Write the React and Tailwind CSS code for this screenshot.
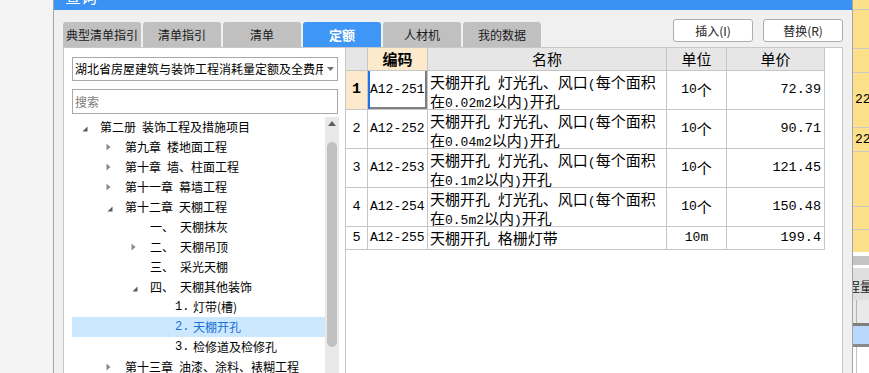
import React from "react";

const CJK = "font-['Noto_Sans_CJK_SC',sans-serif]";
const MONO = "font-['Liberation_Mono',monospace]";

function Mixed({ text, asciiClass }) {
  const parts = text.split(/([\x20-\x7E]+)/).filter(Boolean);
  return parts.map((p, i) =>
    /^[\x20-\x7E]+$/.test(p) ? (
      <span key={i} className={asciiClass}>
        {p}
      </span>
    ) : (
      <span key={i}>{p}</span>
    )
  );
}

function Tri({ open }) {
  return open ? (
    <svg width="6" height="6" viewBox="0 0 6 6" className="ml-[1px] mt-[4px]">
      <polygon points="5.5,0.5 5.5,5.5 0.5,5.5" fill="#5a5a5a" />
    </svg>
  ) : (
    <svg width="5" height="8" viewBox="0 0 5 8">
      <polygon points="0.5,0.5 4.5,4 0.5,7.5" fill="#8a8a8a" />
    </svg>
  );
}

const padCls = ["pl-[9px]", "pl-[34px]", "pl-[59px]", "pl-[84px]"];

const tree = [
  { lv: 0, open: true, a: "第二册", b: "装饰工程及措施项目" },
  { lv: 1, open: false, a: "第九章", b: "楼地面工程" },
  { lv: 1, open: false, a: "第十章", b: "墙、柱面工程" },
  { lv: 1, open: false, a: "第十一章", b: "幕墙工程" },
  { lv: 1, open: true, a: "第十二章", b: "天棚工程" },
  { lv: 2, a: "一、", b: "天棚抹灰" },
  { lv: 2, open: false, a: "二、", b: "天棚吊顶" },
  { lv: 2, a: "三、", b: "采光天棚" },
  { lv: 2, open: true, a: "四、", b: "天棚其他装饰" },
  { lv: 3, a: "1.", b: "灯带(槽)", num: true },
  { lv: 3, a: "2.", b: "天棚开孔", num: true, sel: true },
  { lv: 3, a: "3.", b: "检修道及检修孔", num: true },
  { lv: 1, open: false, a: "第十三章", b: "油漆、涂料、裱糊工程" },
];

const rows = [
  { n: "1", code: "A12-251", name: ["天棚开孔 灯光孔、风口(每个面积", "在0.02m2以内)开孔"], unit: "10个", price: "72.39" },
  { n: "2", code: "A12-252", name: ["天棚开孔 灯光孔、风口(每个面积", "在0.04m2以内)开孔"], unit: "10个", price: "90.71" },
  { n: "3", code: "A12-253", name: ["天棚开孔 灯光孔、风口(每个面积", "在0.1m2以内)开孔"], unit: "10个", price: "121.45" },
  { n: "4", code: "A12-254", name: ["天棚开孔 灯光孔、风口(每个面积", "在0.5m2以内)开孔"], unit: "10个", price: "150.48" },
  { n: "5", code: "A12-255", name: ["天棚开孔 格栅灯带"], unit: "10m", price: "199.4" },
];

const tabs = ["典型清单指引", "清单指引", "清单", "定额", "人材机", "我的数据"];

const cell = "border-r border-b border-[#c6c6c6]";

export default function App() {
  return (
    <div className={`flex h-[373px] w-[869px] overflow-hidden ${CJK} text-[12px] text-black`}>
      {/* left background strip */}
      <div className="h-full w-[54px] shrink-0 border-r border-[#a6a6a6] bg-[#f3f3f3]" />

      {/* dialog */}
      <div className="flex h-full w-[799px] shrink-0 flex-col border-r border-[#a6a6a6] bg-[#f0f0f0]">
        <div className="h-[10px] shrink-0 overflow-hidden bg-[#3a92f4] pl-[11px]">
          <div className="-mt-[12px] text-[16px] leading-[16px] text-white">查询</div>
        </div>

        <div className="flex min-h-0 flex-1 flex-col px-[9px]">
          {/* tabs + buttons */}
          <div className="flex h-[37px] shrink-0 items-end justify-between">
            <div className="flex items-end gap-[2px]">
              {tabs.map((t) =>
                t === "定额" ? (
                  <div
                    key={t}
                    className="flex h-[25px] w-[78px] items-center justify-center rounded-t-[3px] bg-[#3e97f7] text-[13px] font-bold text-white"
                  >
                    {t}
                  </div>
                ) : (
                  <div
                    key={t}
                    className="flex h-[25px] w-[78px] items-center justify-center rounded-t-[3px] bg-[#c0c0c0] text-[12px] text-[#1a1a1a]"
                  >
                    {t}
                  </div>
                )
              )}
            </div>
            <div className="mb-[5px] flex gap-[10px]">
              <div className="flex h-[23px] w-[80px] items-center justify-center rounded-[3px] border border-[#adadad] bg-white text-[12px] text-[#222]">
                插入(I)
              </div>
              <div className="flex h-[23px] w-[80px] items-center justify-center rounded-[3px] border border-[#adadad] bg-white text-[12px] text-[#222]">
                替换(R)
              </div>
            </div>
          </div>

          {/* content frame */}
          <div className="flex min-h-0 flex-1 border-l border-r border-t border-[#c8c8c8]">
            {/* left panel */}
            <div className="flex w-[281px] shrink-0 flex-col bg-white">
              <div className="pl-[8px] pr-[7px] pt-[9px]">
                <div className="flex h-[24px] items-center border border-[#a9a9a9] bg-white pl-[2px]">
                  <div className="w-[248px] overflow-hidden whitespace-nowrap text-[12px]">
                    湖北省房屋建筑与装饰工程消耗量定额及全费用基价表(2018)
                  </div>
                  <div className="flex flex-1 justify-center">
                    <svg width="7" height="4" viewBox="0 0 7 4">
                      <polygon points="0,0 7,0 3.5,4" fill="#707070" />
                    </svg>
                  </div>
                </div>
              </div>
              <div className="pl-[8px] pr-[7px] pt-[8px]">
                <div className="flex h-[25px] items-center border border-[#a9a9a9] bg-white pl-[2px] text-[12px] text-[#7a7a7a]">
                  搜索
                </div>
              </div>
              <div className="flex min-h-0 flex-1 pl-[8px] pr-[6px] pt-[3px]">
                <div className="flex w-[253px] flex-col">
                  {tree.map((r, i) => (
                    <div
                      key={i}
                      className={`flex h-[20px] shrink-0 items-center whitespace-nowrap leading-[20px] ${padCls[r.lv]} ${
                        r.sel ? "bg-[#cce8ff] text-[#1a6fd8]" : "text-black"
                      }`}
                    >
                      <div className="flex w-[19px] shrink-0 items-center">
                        {r.open !== undefined && <Tri open={r.open} />}
                      </div>
                      {r.num ? (
                        <span className={`w-[18px] shrink-0 ${MONO} text-[12px]`}>{r.a}</span>
                      ) : (
                        <span className="mr-[6px]">{r.a}</span>
                      )}
                      <span>
                        <Mixed text={r.b} asciiClass="" />
                      </span>
                    </div>
                  ))}
                </div>
                <div className="flex w-[14px] shrink-0 flex-col items-center bg-[#e9e9e9]">
                  <svg width="8" height="5" viewBox="0 0 8 5" className="mt-[4px]">
                    <polygon points="0,5 8,5 4,0" fill="#606060" />
                  </svg>
                  <div className="mt-[16px] h-[205px] w-[10px] rounded-full bg-[#c1c1c1]" />
                </div>
              </div>
            </div>

            {/* table area */}
            <div className="min-w-0 flex-1 border-l border-[#c6c6c6] bg-white">
              <div className="flex w-[479px] flex-col">
                {/* header */}
                <div className="flex h-[23px] text-[15px]">
                  <div className={`w-[22px] bg-[#e6e6e6] ${cell}`} />
                  <div className={`flex w-[60px] items-center justify-center bg-[#fde9cc] font-bold ${cell}`}>编码</div>
                  <div className={`flex w-[239px] items-center justify-center bg-[#e6e6e6] ${cell}`}>名称</div>
                  <div className={`flex w-[60px] items-center justify-center bg-[#e6e6e6] ${cell}`}>单位</div>
                  <div className={`flex w-[98px] items-center justify-center bg-[#e6e6e6] ${cell}`}>单价</div>
                </div>
                {rows.map((r, i) => (
                  <div key={r.n} className={`flex text-[15px] ${i === 4 ? "h-[23px]" : "h-[39px]"}`}>
                    <div
                      className={`flex w-[22px] items-center justify-center ${MONO} ${cell} ${
                        i === 0 ? "bg-[#fde9cc] text-[15px] font-bold" : "text-[13.5px]"
                      }`}
                    >
                      {r.n}
                    </div>
                    <div
                      className={`flex w-[60px] items-center whitespace-nowrap pl-[2px] ${MONO} text-[13px] ${cell} ${
                        i === 0 ? "shadow-[inset_2px_0_0_#1e73e8,inset_-2px_-2px_0_#7f7f7f]" : ""
                      }`}
                    >
                      {r.code}
                    </div>
                    <div className={`w-[239px] pl-[2px] pt-[3px] leading-[16px] ${cell}`}>
                      {r.name.map((l, k) => (
                        <div key={k} className="whitespace-nowrap">
                          <Mixed text={l} asciiClass={`${MONO} text-[13px]`} />
                        </div>
                      ))}
                    </div>
                    <div className={`flex w-[60px] items-center justify-center whitespace-nowrap ${cell}`}>
                      <Mixed text={r.unit} asciiClass={`${MONO} text-[13px]`} />
                    </div>
                    <div className={`flex w-[98px] items-center justify-end pr-[3px] ${MONO} text-[13.5px] ${cell}`}>
                      {r.price}
                    </div>
                  </div>
                ))}
              </div>
            </div>
          </div>
        </div>
      </div>

      {/* right background strip */}
      <div className="flex h-full w-[16px] shrink-0 flex-col overflow-hidden bg-white">
        <div className="h-[10px] shrink-0 border-b border-[#c9c9c9] bg-[#fde08a]" />
        <div className="h-[39px] shrink-0 border-b border-[#c9c9c9] bg-[#fde08a]" />
        <div className="h-[24px] shrink-0 border-b border-[#c9c9c9] bg-[#fde08a]" />
        <div className={`flex h-[55px] shrink-0 items-center border-b border-[#c9c9c9] bg-[#fde08a] pl-[2px] ${MONO} text-[13px]`}>
          22
        </div>
        <div className={`flex h-[24px] shrink-0 items-center border-b border-[#c9c9c9] bg-[#fde08a] pl-[2px] ${MONO} text-[13px]`}>
          22
        </div>
        <div className="h-[55px] shrink-0 border-b border-[#c9c9c9] bg-[#fde08a]" />
        <div className="h-[23px] shrink-0 border-b border-[#c9c9c9] bg-[#fde08a]" />
        <div className="h-[22px] shrink-0 bg-[#fde08a]" />
        <div className="h-[4px] shrink-0 bg-white" />
        <div className="h-[9px] shrink-0 bg-[#c3c3c3]" />
        <div className="h-[3px] shrink-0 bg-white" />
        <div className="flex h-[32px] shrink-0 items-center bg-[#dfdfdf] pt-[4px]">
          <span className="-ml-[6px] whitespace-nowrap text-[13px] text-[#222]">程量</span>
        </div>
        <div className="h-[23px] shrink-0 bg-[#e9e9e9] pl-[3px]">
          <div className="h-full border-l border-[#b4b4b4]" />
        </div>
        <div className="h-[3px] shrink-0 bg-[#7f7f7f]" />
        <div className="h-[18px] shrink-0 bg-[#b9d8fc]" />
        <div className="h-[3px] shrink-0 bg-[#8a8a8a]" />
        <div className="flex-1 bg-white pl-[3px]">
          <div className="h-full border-l border-[#c4c4c4]" />
        </div>
      </div>
    </div>
  );
}
